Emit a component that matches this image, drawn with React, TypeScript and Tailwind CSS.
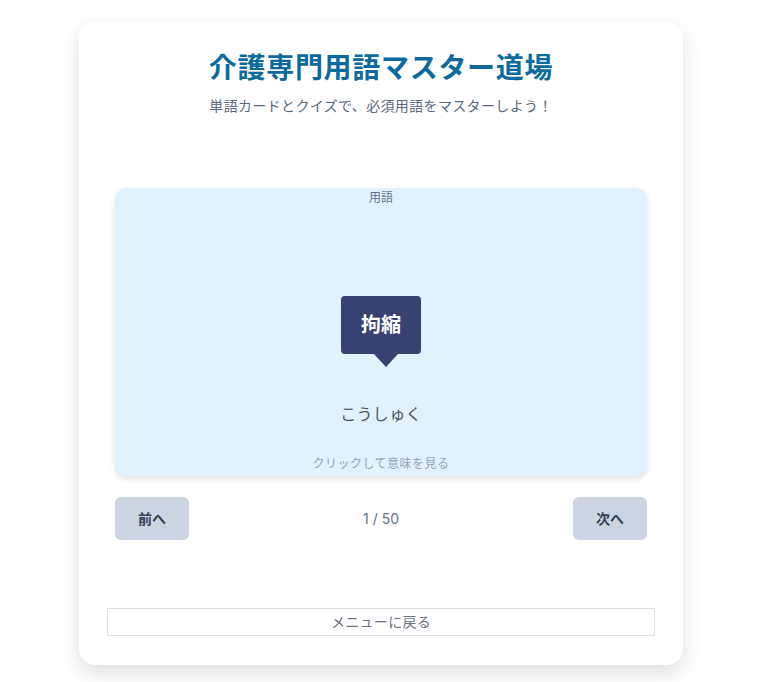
import { useState } from 'react'

const TERMS = [
  { term: '拘縮', reading: 'こうしゅく' },
]

export default function App() {
  const [index, setIndex] = useState(0)
  const item = TERMS[index % TERMS.length]

  return (
    <div className="min-h-screen bg-white pt-[22px] font-['Inter','Noto_Sans_CJK_JP',sans-serif]">
      <div className="ml-[79px] w-[604px] rounded-2xl bg-white px-7 pb-[29px] pt-[26px] shadow-[0_8px_20px_rgba(0,0,0,0.13)]">
        <h1 className="text-center text-[28px] font-bold leading-[40px] tracking-[0.7px] text-[#0d6a9c]">介護専門用語マスター道場</h1>
        <p className="mt-2 text-center text-sm leading-5 tracking-[0.35px] text-[#5b6778]">
          単語カードとクイズで、必須用語をマスターしよう！
        </p>

        <div className="mt-[72px] px-2">
          <div className="flex h-[288px] cursor-pointer flex-col items-center rounded-xl bg-[#e0f2fe] shadow-[0_3px_6px_rgba(0,0,0,0.12)]">
            <span className="pt-[2px] text-xs leading-4 text-[#64748b]">用語</span>
            <div className="relative mt-[90px] flex h-[58px] w-[80px] items-center justify-center rounded-sm bg-[#384272]">
              <span className="text-xl font-bold text-white">{item.term}</span>
              <span className="absolute left-[33px] top-full h-0 w-0 border-x-[12px] border-t-[13px] border-x-transparent border-t-[#384272]" />
            </div>
            <span className="mt-[48px] text-base leading-6 tracking-[0.3px] text-[#4b5563]">{item.reading}</span>
            <span className="mt-[30px] text-xs leading-4 tracking-[0.5px] text-[#94a3b8]">クリックして意味を見る</span>
          </div>

          <div className="mt-[21px] flex items-center justify-between">
            <button
              className="h-[43px] w-[74px] rounded-md bg-[#cbd5e1] text-sm font-bold text-[#334155]"
              onClick={() => setIndex((i) => Math.max(0, i - 1))}
            >
              前へ
            </button>
            <span className="text-sm text-[#64748b]">{index + 1} / 50</span>
            <button
              className="h-[43px] w-[74px] rounded-md bg-[#cbd5e1] text-sm font-bold text-[#334155]"
              onClick={() => setIndex((i) => Math.min(49, i + 1))}
            >
              次へ
            </button>
          </div>
        </div>

        <button className="mt-[68px] h-[28px] w-full border border-[#dcdfe4] text-sm tracking-[0.3px] text-[#6b7280]">
          メニューに戻る
        </button>
      </div>
    </div>
  )
}
